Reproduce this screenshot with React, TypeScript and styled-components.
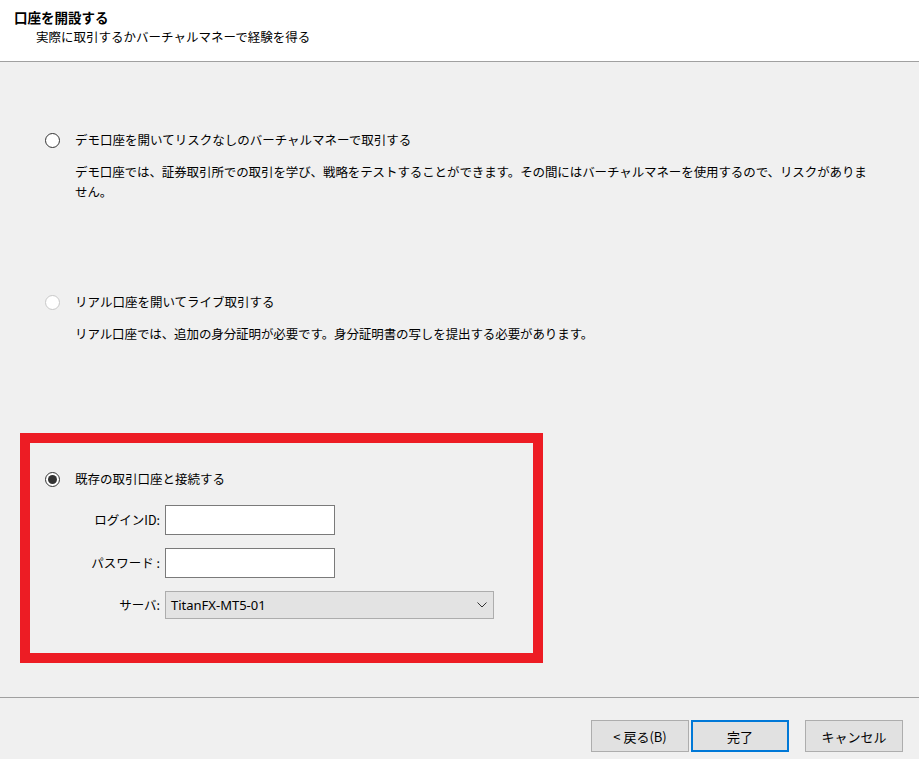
import React from "react"
import styled, { createGlobalStyle } from "styled-components"

const GlobalStyle = createGlobalStyle`
  html, body {
    margin: 0;
    padding: 0;
    background: #f0f0f0;
  }
  body {
    font-family: "Noto Sans CJK JP", "Noto Sans", sans-serif;
    font-size: 12.5px;
    color: #000;
  }
`

const App: React.FC = () => {
  return (
    <>
      <GlobalStyle />
      <Wizard>
        <Header>
          <Title>口座を開設する</Title>
          <Subtitle>実際に取引するかバーチャルマネーで経験を得る</Subtitle>
        </Header>

        <Body>
          <Option $top={68}>
            <RadioRow>
              <Radio $variant="normal" />
              <span>デモ口座を開いてリスクなしのバーチャルマネーで取引する</span>
            </RadioRow>
            <Description>
              デモ口座では、証券取引所での取引を学び、戦略をテストすることができます。その間にはバーチャルマネーを使用するので、リスクがありま
              <br />
              せん。
            </Description>
          </Option>

          <Option $top={90}>
            <RadioRow>
              <Radio $variant="light" />
              <span>リアル口座を開いてライブ取引する</span>
            </RadioRow>
            <Description>
              リアル口座では、追加の身分証明が必要です。身分証明書の写しを提出する必要があります。
            </Description>
          </Option>

          <Highlight>
            <RadioRow>
              <Radio $variant="checked" />
              <span>既存の取引口座と接続する</span>
            </RadioRow>
            <Fields>
              <FieldLabel>ログインID:</FieldLabel>
              <TextInput />
              <FieldLabel>パスワード :</FieldLabel>
              <TextInput />
              <FieldLabel>サーバ:</FieldLabel>
              <Select>
                <span>TitanFX-MT5-01</span>
                <svg width="10" height="6" viewBox="0 0 10 6">
                  <path d="M0.5 0.5 L5 5 L9.5 0.5" fill="none" stroke="#333" strokeWidth="1" />
                </svg>
              </Select>
            </Fields>
          </Highlight>
        </Body>

        <Footer>
          <Button>&lt; 戻る(B)</Button>
          <Button $primary>完了</Button>
          <Button $spaced>キャンセル</Button>
        </Footer>
      </Wizard>
    </>
  )
}

const Wizard = styled.div`
  width: 919px;
  height: 759px;
  display: flex;
  flex-direction: column;
  background: #f0f0f0;
  overflow: hidden;
`

const Header = styled.header`
  height: 62px;
  box-sizing: border-box;
  padding: 7px 0 0 14px;
  background: #fff;
  border-bottom: 1px solid #a0a0a0;
  line-height: 20px;
`

const Title = styled.div`
  font-size: 13.5px;
  font-weight: 700;
`

const Subtitle = styled.div`
  padding-left: 22px;
`

const Body = styled.main`
  display: flex;
  flex-direction: column;
  padding-left: 45px;
  line-height: 20px;
`

const Option = styled.section<{ $top: number }>`
  margin-top: ${({ $top }) => $top}px;
  display: flex;
  flex-direction: column;
`

const RadioRow = styled.div`
  display: flex;
  align-items: center;
  gap: 15px;
  height: 20px;
`

const Radio = styled.span<{ $variant: "normal" | "light" | "checked" }>`
  width: 15px;
  height: 15px;
  box-sizing: border-box;
  border-radius: 50%;
  background: #fff;
  border: 1px solid ${({ $variant }) => ($variant === "light" ? "#c8c8c8" : "#333")};
  display: flex;
  align-items: center;
  justify-content: center;
  flex-shrink: 0;

  &::after {
    content: "";
    display: ${({ $variant }) => ($variant === "checked" ? "block" : "none")};
    width: 9px;
    height: 9px;
    border-radius: 50%;
    background: #333;
  }
`

const Description = styled.p`
  margin: 12px 0 0 30px;
  width: 820px;
  letter-spacing: -0.1px;
`

const Highlight = styled.section`
  margin: 89px 0 0 -25px;
  width: 523px;
  box-sizing: border-box;
  border: 10px solid #ed1c24;
  padding: 26px 0 34px 15px;
  display: flex;
  flex-direction: column;
`

const Fields = styled.div`
  display: grid;
  grid-template-columns: 115px auto;
  column-gap: 5px;
  row-gap: 13px;
  margin-top: 16px;
  align-items: center;
  justify-items: start;
`

const FieldLabel = styled.label`
  justify-self: end;
`

const TextInput = styled.input`
  width: 170px;
  height: 30px;
  box-sizing: border-box;
  border: 1px solid #7a7a7a;
  background: #fff;
  outline: none;
  font: inherit;
`

const Select = styled.div`
  width: 329px;
  height: 28px;
  box-sizing: border-box;
  border: 1px solid #adadad;
  background: #e3e3e3;
  display: flex;
  align-items: center;
  justify-content: space-between;
  padding: 0 6px 0 5px;
  font-family: "Noto Sans", "Noto Sans CJK JP", sans-serif;
  font-size: 13px;
`

const Footer = styled.footer`
  margin-top: auto;
  height: 62px;
  box-sizing: border-box;
  border-top: 1px solid #a0a0a0;
  padding: 22px 16px 0 0;
  display: flex;
  justify-content: flex-end;
  align-items: flex-start;
  gap: 2px;
`

const Button = styled.button<{ $primary?: boolean; $spaced?: boolean }>`
  width: 98px;
  height: 32px;
  box-sizing: border-box;
  margin-left: ${({ $spaced }) => ($spaced ? "14px" : "0")};
  background: #e1e1e1;
  border: ${({ $primary }) => ($primary ? "2px solid #0078d7" : "1px solid #adadad")};
  font: inherit;
  font-size: 13px;
  color: #000;
  padding: 0;
`

export default App
